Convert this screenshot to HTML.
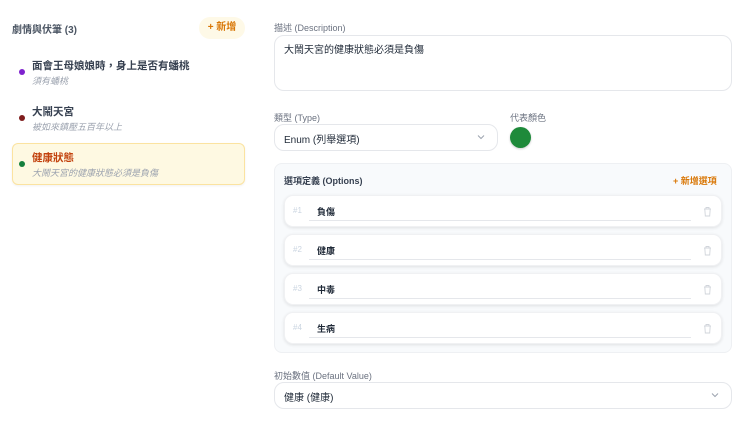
<!DOCTYPE html>
<html><head><meta charset="utf-8"><style>
*{box-sizing:border-box;margin:0;padding:0}
body{width:740px;height:424px;background:#fff;font-family:"Liberation Sans","Noto Sans CJK TC",sans-serif;position:relative;overflow:hidden;color:#1f2937}
.a{position:absolute}
.lbl{font-size:9px;color:#6b7280}
.dot{width:6px;height:6px;border-radius:50%}
.t{font-size:10.5px;font-weight:bold;color:#374151}
.s{font-size:9px;font-style:italic;color:#9ca3af}
.box{border:1px solid #e5e7eb;border-radius:10px;background:#fff}
.row{left:284px;width:438px;height:32px;background:#fff;border-radius:9px;box-shadow:0 1px 3px rgba(0,0,0,.1);border:1px solid #f0f1f3}
.row .n{position:absolute;left:8px;top:10px;font-size:8px;color:#cbd5e1}
.row .v{position:absolute;left:32px;top:9px;font-size:9px;font-weight:bold;color:#1f2937}
.row .u{position:absolute;left:24px;right:30px;bottom:5px;border-top:1px solid #e5e7eb}
.row svg{position:absolute;right:9px;top:10px}
.chev{position:absolute;right:12px;top:9px}
</style></head><body>
<div class="a" style="left:12px;top:21px;font-size:10px;font-weight:bold;color:#4b5563">劇情與伏筆 (3)</div>
<div class="a" style="left:199px;top:17px;width:46px;height:22px;border-radius:11px;background:#fef9e7;color:#d97706;font-size:10px;font-weight:bold;line-height:22px;text-align:center">+ 新增</div>

<div class="a dot" style="left:19px;top:69px;background:#7e22ce"></div>
<div class="a t" style="left:32px;top:58px">面會王母娘娘時，身上是否有蟠桃</div>
<div class="a s" style="left:32px;top:74px">須有蟠桃</div>

<div class="a dot" style="left:19px;top:115px;background:#7f1d1d"></div>
<div class="a t" style="left:32px;top:104px">大鬧天宮</div>
<div class="a s" style="left:32px;top:120px">被如來鎮壓五百年以上</div>

<div class="a" style="left:12px;top:143px;width:233px;height:42px;background:#fef9e2;border:1px solid #fbe3a0;border-radius:6px;box-shadow:0 1px 2px rgba(0,0,0,.06)"></div>
<div class="a dot" style="left:19px;top:161px;background:#15803d"></div>
<div class="a t" style="left:32px;top:150px;color:#c2410c">健康狀態</div>
<div class="a s" style="left:32px;top:166px">大鬧天宮的健康狀態必須是負傷</div>

<div class="a lbl" style="left:274px;top:21px">描述 (Description)</div>
<div class="a box" style="left:274px;top:35px;width:458px;height:56px"></div>
<div class="a" style="left:284px;top:41px;font-size:10px;color:#1f2937">大鬧天宮的健康狀態必須是負傷</div>

<div class="a lbl" style="left:274px;top:111px">類型 (Type)</div>
<div class="a box" style="left:274px;top:124px;width:224px;height:27px"><span style="position:absolute;left:9px;top:6px;font-size:10px">Enum (列舉選項)</span>
<svg class="chev" width="8" height="6" viewBox="0 0 8 6"><path d="M1 1.5l3 3 3-3" fill="none" stroke="#9ca3af" stroke-width="1"/></svg></div>
<div class="a lbl" style="left:510px;top:111px">代表顏色</div>
<div class="a" style="left:510px;top:127px;width:21px;height:21px;border-radius:50%;background:#1e8a3a;box-shadow:0 1px 2px rgba(0,0,0,.2)"></div>

<div class="a" style="left:274px;top:163px;width:458px;height:190px;background:#f8fafc;border:1px solid #eef0f3;border-radius:8px"></div>
<div class="a" style="left:284px;top:174px;font-size:9px;font-weight:bold;color:#374151">選項定義 (Options)</div>
<div class="a" style="left:673px;top:174px;font-size:9px;font-weight:bold;color:#d97706">+ 新增選項</div>

<div class="a row" style="top:195px"><span class="n">#1</span><span class="v">負傷</span><div class="u"></div><svg width="9" height="11" viewBox="0 0 9 11"><path d="M1 3h7M3 3V1.5h3V3M1.8 3l.5 7h4.4l.5-7" fill="none" stroke="#d1d5db" stroke-width=".9"/></svg></div>
<div class="a row" style="top:234px"><span class="n">#2</span><span class="v">健康</span><div class="u"></div><svg width="9" height="11" viewBox="0 0 9 11"><path d="M1 3h7M3 3V1.5h3V3M1.8 3l.5 7h4.4l.5-7" fill="none" stroke="#d1d5db" stroke-width=".9"/></svg></div>
<div class="a row" style="top:273px"><span class="n">#3</span><span class="v">中毒</span><div class="u"></div><svg width="9" height="11" viewBox="0 0 9 11"><path d="M1 3h7M3 3V1.5h3V3M1.8 3l.5 7h4.4l.5-7" fill="none" stroke="#d1d5db" stroke-width=".9"/></svg></div>
<div class="a row" style="top:312px"><span class="n">#4</span><span class="v">生病</span><div class="u"></div><svg width="9" height="11" viewBox="0 0 9 11"><path d="M1 3h7M3 3V1.5h3V3M1.8 3l.5 7h4.4l.5-7" fill="none" stroke="#d1d5db" stroke-width=".9"/></svg></div>

<div class="a lbl" style="left:274px;top:369px">初始數值 (Default Value)</div>
<div class="a box" style="left:274px;top:382px;width:458px;height:27px"><span style="position:absolute;left:9px;top:6px;font-size:10px">健康 (健康)</span>
<svg class="chev" width="8" height="6" viewBox="0 0 8 6"><path d="M1 1.5l3 3 3-3" fill="none" stroke="#9ca3af" stroke-width="1"/></svg></div>
</body></html>
